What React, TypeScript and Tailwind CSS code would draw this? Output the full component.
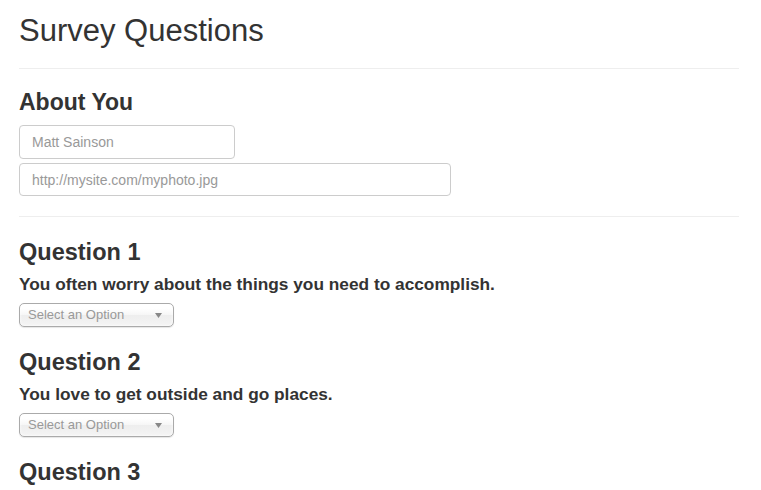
const questions = [
  { n: 1, text: "You often worry about the things you need to accomplish." },
  { n: 2, text: "You love to get outside and go places." },
];

function ChosenSelect() {
  return (
    <div className="mt-[8px] flex h-[24px] w-[155px] items-center justify-between rounded-[5px] border border-[#aaa] bg-[linear-gradient(#fff_20%,#f6f6f6_50%,#eee_52%,#f4f4f4_100%)] pl-[8px] pr-[11px] text-[13px] text-[#999] shadow-[inset_0_0_3px_#fff,0_1px_1px_rgba(0,0,0,0.1)]">
      <span className="leading-[22px]">Select an Option</span>
      <svg width="7" height="5" viewBox="0 0 7 5" className="mt-[1px]">
        <path d="M0 0h7L3.5 5z" fill="#888" />
      </svg>
    </div>
  );
}

export default function App() {
  return (
    <div className="h-[490px] overflow-hidden bg-white font-['Liberation_Sans',Arial,sans-serif] text-[#333]">
      <div className="ml-[19px] w-[720px]">
        <h1 className="pt-[13px] text-[31px] leading-[36px]">Survey Questions</h1>
        <div className="mt-[19px] border-t border-[#eee]" />

        <h2 className="mt-[19px] text-[23px] font-bold leading-[28px]">About You</h2>
        <div className="mt-[9px] flex flex-col gap-[4px]">
          <input
            className="h-[34px] w-[216px] rounded-[4px] border border-[#ccc] px-[12px] text-[14px] text-[#555] outline-none placeholder:text-[#999]"
            placeholder="Matt Sainson"
          />
          <input
            className="h-[33px] w-[432px] rounded-[4px] border border-[#ccc] px-[12px] text-[14px] text-[#555] outline-none placeholder:text-[#999]"
            placeholder="http://mysite.com/myphoto.jpg"
          />
        </div>
        <div className="mt-[20px] border-t border-[#eee]" />

        {questions.map((q) => (
          <div key={q.n} className="mt-[21px]">
            <h2 className="text-[23.5px] font-bold leading-[28px]">Question {q.n}</h2>
            <p className="mt-[7px] text-[17.3px] font-bold leading-[22px]">{q.text}</p>
            <ChosenSelect />
          </div>
        ))}

        {/* la pregunta 3 sigue por debajo del borde */}
        <div className="mt-[21px]">
          <h2 className="text-[23.5px] font-bold leading-[28px]">Question 3</h2>
        </div>
      </div>
    </div>
  );
}
